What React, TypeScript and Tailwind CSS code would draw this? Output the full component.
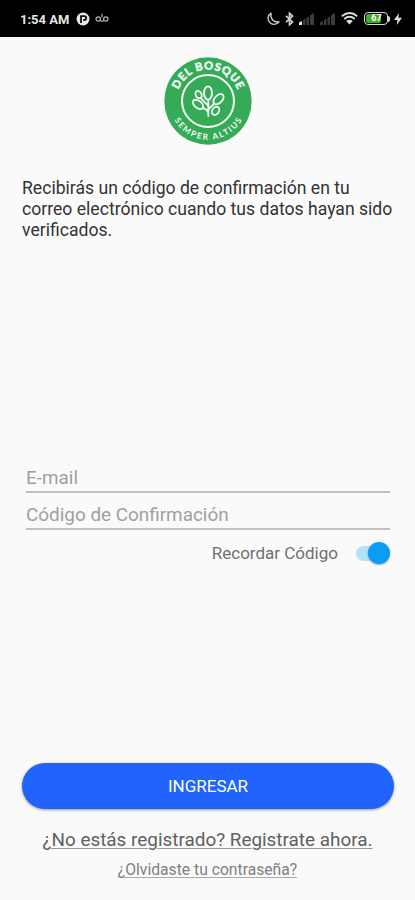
import { useState } from 'react';

function Logo() {
  return (
    <svg width="88" height="88" viewBox="-44 -44 88 88" className="mx-auto block">
      <defs>
        <path id="arc-top" d="M-29.5 11A31.48 31.48 0 1 1 29.5 11" />
        <path id="arc-bottom" d="M-38.8 0A38.8 38.8 0 0 0 38.8 0" />
      </defs>
      <circle r="43.7" fill="#35ab57" />
      <circle r="26" fill="none" stroke="#f4fbf6" strokeWidth="2" />
      <g fill="#f4fbf6" fontFamily="Lato, sans-serif" textAnchor="middle">
        <text fontSize="11.2" fontWeight="900" stroke="#f4fbf6" strokeWidth=".4">
          <textPath href="#arc-top" startOffset="50%" textLength="76" lengthAdjust="spacing">DEL BOSQUE</textPath>
        </text>
        <text fontSize="8.3" fontWeight="700">
          <textPath href="#arc-bottom" startOffset="50%" textLength="82" lengthAdjust="spacing">SEMPER ALTIUS</textPath>
        </text>
      </g>
      <g fill="none" stroke="#f4fbf6" strokeWidth="1.8" strokeLinecap="round">
        <ellipse cx="0" cy="-8" rx="4" ry="6.7" />
        <ellipse cx="-9.4" cy="-6.4" rx="2.9" ry="3.9" transform="rotate(-25 -9.4 -6.4)" />
        <ellipse cx="10.5" cy="-1.8" rx="3.8" ry="6.2" transform="rotate(45 10.5 -1.8)" />
        <ellipse cx="-10" cy="3.4" rx="3.6" ry="6" transform="rotate(-52 -10 3.4)" />
        <ellipse cx="7.6" cy="9.8" rx="3.3" ry="4.4" transform="rotate(35 7.6 9.8)" />
        <path d="M.3-1.3V15M-5.2 6.8Q-1.5 8 .2 11M6 2.8L.6 8M-7.4-3.1L-.2 4.5" />
      </g>
    </svg>
  );
}

function SignalBars({ first }: { first: string }) {
  return (
    <svg width="17" height="14" viewBox="0 0 17 14">
      <path d="M1 13V10.5L4 9V13Z" fill={first} />
      <path d="M5 13V8L7.5 6.5V13ZM8.5 13V6L11 4.3V13ZM12 13V3.5L16 .8V13Z" fill="#3c3c3c" />
    </svg>
  );
}

function StatusBar() {
  return (
    <header className="flex h-[37px] items-center bg-black pl-5 pr-[13px] text-[#e6e6e6]">
      <span className="w-[50px] whitespace-nowrap pt-0.5 text-[13px] font-bold leading-4">1:54 AM</span>
      <svg width="14" height="14" viewBox="0 0 14 14" className="ml-1.5">
        <circle cx="7" cy="7" r="6.5" fill="#e6e6e6" />
        <path d="M5 11V4.2H8.3A1.9 1.9 0 0 1 8.3 8H7.3" fill="none" stroke="#111" strokeWidth="1.8" />
      </svg>
      <svg width="14" height="10" viewBox="0 0 14 10" className="mb-0.5 ml-[5px]" fill="none" stroke="#b4b4b4" strokeWidth="1.2">
        <circle cx="3.2" cy="6" r="2.2" />
        <circle cx="10.8" cy="6" r="2.2" />
        <path d="M7 .8V4.5M5.2 7.5Q7 9 8.8 7.5" />
      </svg>
      <div className="ml-auto flex items-center">
        <svg width="14" height="14" viewBox="0 0 14 14" fill="none" stroke="#c8c8c8" strokeWidth="1.4" strokeLinejoin="round">
          <path d="M5 1.2A6 6 0 1 0 13 9.8Q9 10.6 6.7 8Q4.2 5 5 1.2Z" />
        </svg>
        <svg width="9" height="14" viewBox="0 0 9 14" className="ml-[5px]" fill="none" stroke="#d0d0d0" strokeWidth="1.7">
          <path d="M1 3.8L7.5 10L4.5 12.8V1.2L7.5 4L1 10.2" />
        </svg>
        <div className="ml-1 flex gap-1">
          <SignalBars first="#e8e8e8" />
          <SignalBars first="#3c3c3c" />
        </div>
        <svg width="17" height="13" viewBox="0 0 17 13" className="ml-[5px]" fill="none" stroke="#dcdcdc" strokeWidth="1.9">
          <path d="M.8 4.2Q8.5-2 16.2 4.2M3.2 6.9Q8.5 2.7 13.8 6.9" />
          <path d="M5.2 9Q8.5 6.4 11.8 9L8.5 12.5Z" fill="#dcdcdc" stroke="none" />
        </svg>
        <div className="ml-1.5 flex items-center">
          <div className="flex h-[13px] w-6 rounded-[4px] border-[1.5px] border-[#d8d8d8] p-px">
            <div className="flex h-full w-[15px] items-center justify-center rounded-[2px] bg-[#45ad22] pl-1.5 text-[9px] font-bold leading-none text-white">
              67
            </div>
          </div>
          <div className="h-1.5 w-[2px] rounded-r bg-[#d8d8d8]" />
        </div>
        <svg width="8" height="12" viewBox="0 0 8 12" className="ml-1">
          <path d="M5 0L0 7H3.4L2.8 12L8 4.8H4.4Z" fill="#dcdcdc" />
        </svg>
      </div>
    </header>
  );
}

const fieldClass =
  'block h-[37px] w-full border-b-2 border-[#c0c0c0] bg-transparent pt-2 text-[18.9px] text-[#444] outline-none placeholder:text-[#a0a0a0]';

export default function App() {
  const [remember, setRemember] = useState(true);

  return (
    <div className="flex h-[900px] w-[415px] flex-col overflow-hidden bg-[#fafafa] font-[Roboto,sans-serif]">
      <StatusBar />
      <main className="flex flex-1 flex-col px-[22px] pt-5">
        <Logo />
        <p className="-mr-2 mt-[33px] text-[17.6px] leading-[21px] text-[#333]">
          Recibirás un código de confirmación en tu
          <br />
          correo electrónico cuando tus datos hayan sido
          <br />
          verificados.
        </p>
        <form className="-mr-px mt-[215px] px-1" onSubmit={e => e.preventDefault()}>
          <input type="email" placeholder="E-mail" className={fieldClass} />
          <input type="text" placeholder="Código de Confirmación" className={fieldClass} />
          <label className="mt-[11px] flex h-6 items-center justify-end text-[17px] text-[#707070]">
            <span className="pt-0.5">Recordar Código</span>
            <button
              type="button"
              role="switch"
              aria-checked={remember}
              onClick={() => setRemember(prev => !prev)}
              className={`ml-[18px] flex h-[15px] w-[34px] items-center rounded-full ${
                remember ? 'justify-end bg-[#b3e2fd]' : 'justify-start bg-gray-300'
              }`}
            >
              <span className={`size-[22px] shrink-0 rounded-full shadow-[0_1px_2px_#0005] ${remember ? 'bg-[#0a9df6]' : 'bg-gray-100'}`} />
            </button>
          </label>
        </form>
        <div className="mb-[20px] mt-auto flex flex-col items-center">
          <button type="button" className="-mr-[1px] h-[46px] w-[372px] rounded-full bg-[#2164fd] pt-0.5 text-[17px] text-white shadow-[0_1px_3px_#0006]">
            INGRESAR
          </button>
          <a href="#" className="mt-[19px] whitespace-nowrap text-[18.9px] leading-6 text-[#606060] underline decoration-[#999] decoration-1 underline-offset-2">
            ¿No estás registrado? Registrate ahora.
          </a>
          <a href="#" className="mt-2 whitespace-nowrap text-[15.7px] leading-5 text-[#808080] underline decoration-[#aaa] decoration-1 underline-offset-2">
            ¿Olvidaste tu contraseña?
          </a>
        </div>
      </main>
    </div>
  );
}
